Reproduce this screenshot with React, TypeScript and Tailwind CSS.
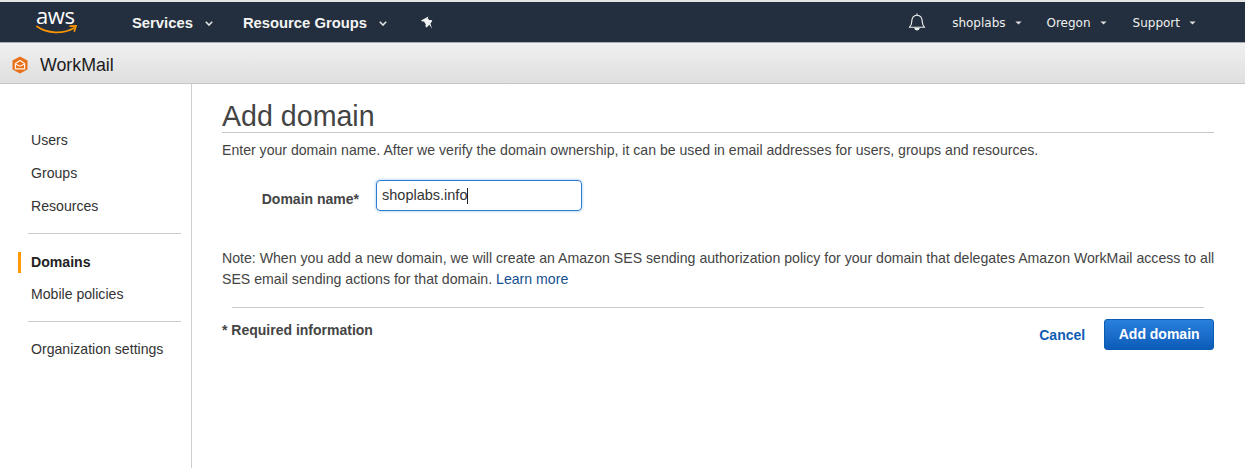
const sans = "font-['Liberation_Sans',Arial,sans-serif]";

function Caret({ className }: { className: string }) {
  return (
    <svg className={className} width="8" height="5" viewBox="0 0 8 5" fill="none" stroke="currentColor" strokeWidth={1.6}>
      <path d="M0.8 0.8L4 4L7.2 0.8" />
    </svg>
  );
}

function SmallCaret({ className }: { className: string }) {
  return (
    <svg className={className} width="7" height="4" viewBox="0 0 7 4" fill="currentColor">
      <path d="M0.4 0.4H6.6L3.5 3.6Z" />
    </svg>
  );
}

function AwsLogo() {
  return (
    <div className="relative w-[42px] h-[36px]">
      <div className="absolute left-0 top-[1px] text-[22px] leading-[20px] text-white tracking-[-0.4px] font-['Open_Sans',sans-serif]">aws</div>
      <svg className="absolute left-0 top-[19px]" width="42" height="13" viewBox="0 0 42 13" fill="none">
        <path d="M1 3.5C11 10.5 27 11.5 38 5" stroke="#f79400" strokeWidth="1.7" strokeLinecap="round" />
        <path d="M33.5 3.2L40 2.8L38.2 8.8" stroke="#f79400" strokeWidth="1.7" fill="none" />
      </svg>
    </div>
  );
}

function TopBar() {
  return (
    <div className="h-[43px] bg-[#232f3e] border-t-2 border-t-[#e4e4e4] border-b border-b-[#a9adb2] flex items-center text-white pt-[2px]">
      <div className="ml-[36px] w-[96px] -mt-[2px]">
        <AwsLogo />
      </div>
      <span className="text-[14.8px] font-bold text-[#f4f4f4]">Services</span>
      <Caret className="ml-[12px] text-[#e6e6e6]" />
      <span className="ml-[30px] text-[14.8px] font-bold text-[#f4f4f4]">Resource Groups</span>
      <Caret className="ml-[12px] text-[#e6e6e6]" />
      <svg className="ml-[33px] -scale-x-100" width="13" height="14" viewBox="0 0 13 14" fill="#f2f2f2">
        <path d="M4.6 0.6L11.9 4.4L10.8 5.6L9 5.4L7.2 8.6L7.6 10.6L6.4 11.4L3.6 8.8L0.9 12.8L2.6 7.6L0.7 5.1L1.6 4L3.7 4.1L5.3 2.6Z" />
      </svg>
      <svg className="ml-auto -mt-[2px]" width="18" height="18" viewBox="0 0 18 18" fill="none" stroke="#f2f2f2" strokeWidth="1.1">
        <path d="M1.4 14.2C3 12.8 3.6 11.4 3.7 9C3.8 6 4.6 2.2 9 2.2C13.4 2.2 14.2 6 14.3 9C14.4 11.4 15 12.8 16.6 14.2Z" strokeLinejoin="round" />
        <path d="M9 0.6V2.2" />
        <path d="M7 15.6C7.6 17.4 10.4 17.4 11 15.6Z" fill="#f2f2f2" />
      </svg>
      <span className="ml-[26px] text-[12px] text-[#f0f0f0] font-['DejaVu_Sans',sans-serif]">shoplabs</span>
      <SmallCaret className="ml-[9px] text-[#dddddd]" />
      <span className="ml-[25px] text-[12px] text-[#f0f0f0] font-['DejaVu_Sans',sans-serif]">Oregon</span>
      <SmallCaret className="ml-[9px] text-[#dddddd]" />
      <span className="ml-[26px] text-[12px] text-[#f0f0f0] font-['DejaVu_Sans',sans-serif]">Support</span>
      <SmallCaret className="ml-[9px] mr-[49px] text-[#dddddd]" />
    </div>
  );
}

function ServiceBar() {
  return (
    <div className="h-[41px] bg-gradient-to-b from-[#f0f0f0] to-[#dfdfdf] border-b border-b-[#c8c8c8] flex items-center pt-[4px]">
      <svg className="ml-[12px]" width="16" height="18" viewBox="0 0 16 18">
        <path d="M8 0.5L15.5 4.5V13.5L8 17.5L0.5 13.5V4.5Z" fill="#e8701a" />
        <path d="M3.4 7.6L8 4.4L12.6 7.6V12.8H3.4Z" fill="none" stroke="#fff3e8" strokeWidth="1.2" />
        <path d="M3.4 8L8 10.2L12.6 8" fill="none" stroke="#fff3e8" strokeWidth="1.2" />
      </svg>
      <span className="ml-[12px] text-[17.8px] text-[#1c1c1c]">WorkMail</span>
    </div>
  );
}

function NavItem({ label, active }: { label: string; active?: boolean }) {
  return (
    <div className={`h-[21px] flex items-center pl-[10px] border-l-[3px] text-[14.1px] ${active ? "border-l-[#ff9900] font-bold text-[#222222]" : "border-l-transparent text-[#333333]"}`}>
      {label}
    </div>
  );
}

function Sidebar() {
  return (
    <aside className="w-[192px] shrink-0 border-r border-r-[#cfcfcf] pl-[18px] pr-[10px] pt-[46px]">
      <div className="flex flex-col gap-[12px]">
        <NavItem label="Users" />
        <NavItem label="Groups" />
        <NavItem label="Resources" />
      </div>
      <div className="ml-[10px] mt-[16px] h-px bg-[#cccccc]" />
      <div className="mt-[18px] flex flex-col gap-[11px]">
        <NavItem label="Domains" active />
        <NavItem label="Mobile policies" />
      </div>
      <div className="ml-[10px] mt-[16px] h-px bg-[#cccccc]" />
      <div className="mt-[17px]">
        <NavItem label="Organization settings" />
      </div>
    </aside>
  );
}

function Content() {
  return (
    <main className="flex-1 pl-[30px] pr-[31px] pt-[15px] text-[#444444]">
      <h1 className="text-[28.6px] leading-[35px] h-[33px] text-[#444444]">Add domain</h1>
      <div className="h-px bg-[#c8c8c8]" />
      <p className="mt-[8px] text-[14.1px] leading-[18px]">
        Enter your domain name. After we verify the domain ownership, it can be used in email addresses for users, groups and resources.
      </p>
      <div className="mt-[21px] flex items-center">
        <label className="w-[137px] text-right text-[14px] font-bold translate-y-[4px]">Domain name*</label>
        <div className="ml-[17px] w-[206px] h-[31px] rounded-[4px] border border-[#2b7cd3] shadow-[0_0_3px_#8fbdea] flex items-center pl-[5px] pt-px text-[14.5px] text-[#333333]">
          shoplabs.info
          <span className="w-px h-[16px] bg-[#222222]" />
        </div>
      </div>
      <p className="mt-[37px] text-[14.13px] leading-[21px] whitespace-nowrap">
        Note: When you add a new domain, we will create an Amazon SES sending authorization policy for your domain that delegates Amazon WorkMail access to all
        <br />
        SES email sending actions for that domain. <span className="text-[#15508f]">Learn more</span>
      </p>
      <div className="mx-[10px] mt-[17px] h-px bg-[#cccccc]" />
      <div className="mt-[11px] flex items-start justify-between">
        <span className="mt-px text-[14px] font-bold">* Required information</span>
        <div className="flex items-center">
          <span className="translate-y-px text-[14px] font-bold text-[#0f5cb5]">Cancel</span>
          <button className="ml-[19px] w-[110px] h-[31px] rounded-[3px] bg-gradient-to-b from-[#2a80dd] to-[#0a5cb8] border border-[#0b5cb0] text-[14px] font-bold text-white">
            Add domain
          </button>
        </div>
      </div>
    </main>
  );
}

export default function App() {
  return (
    <div className={`w-[1245px] h-[468px] overflow-hidden bg-white flex flex-col ${sans}`}>
      <TopBar />
      <ServiceBar />
      <div className="flex flex-1 min-h-0">
        <Sidebar />
        <Content />
      </div>
    </div>
  );
}
